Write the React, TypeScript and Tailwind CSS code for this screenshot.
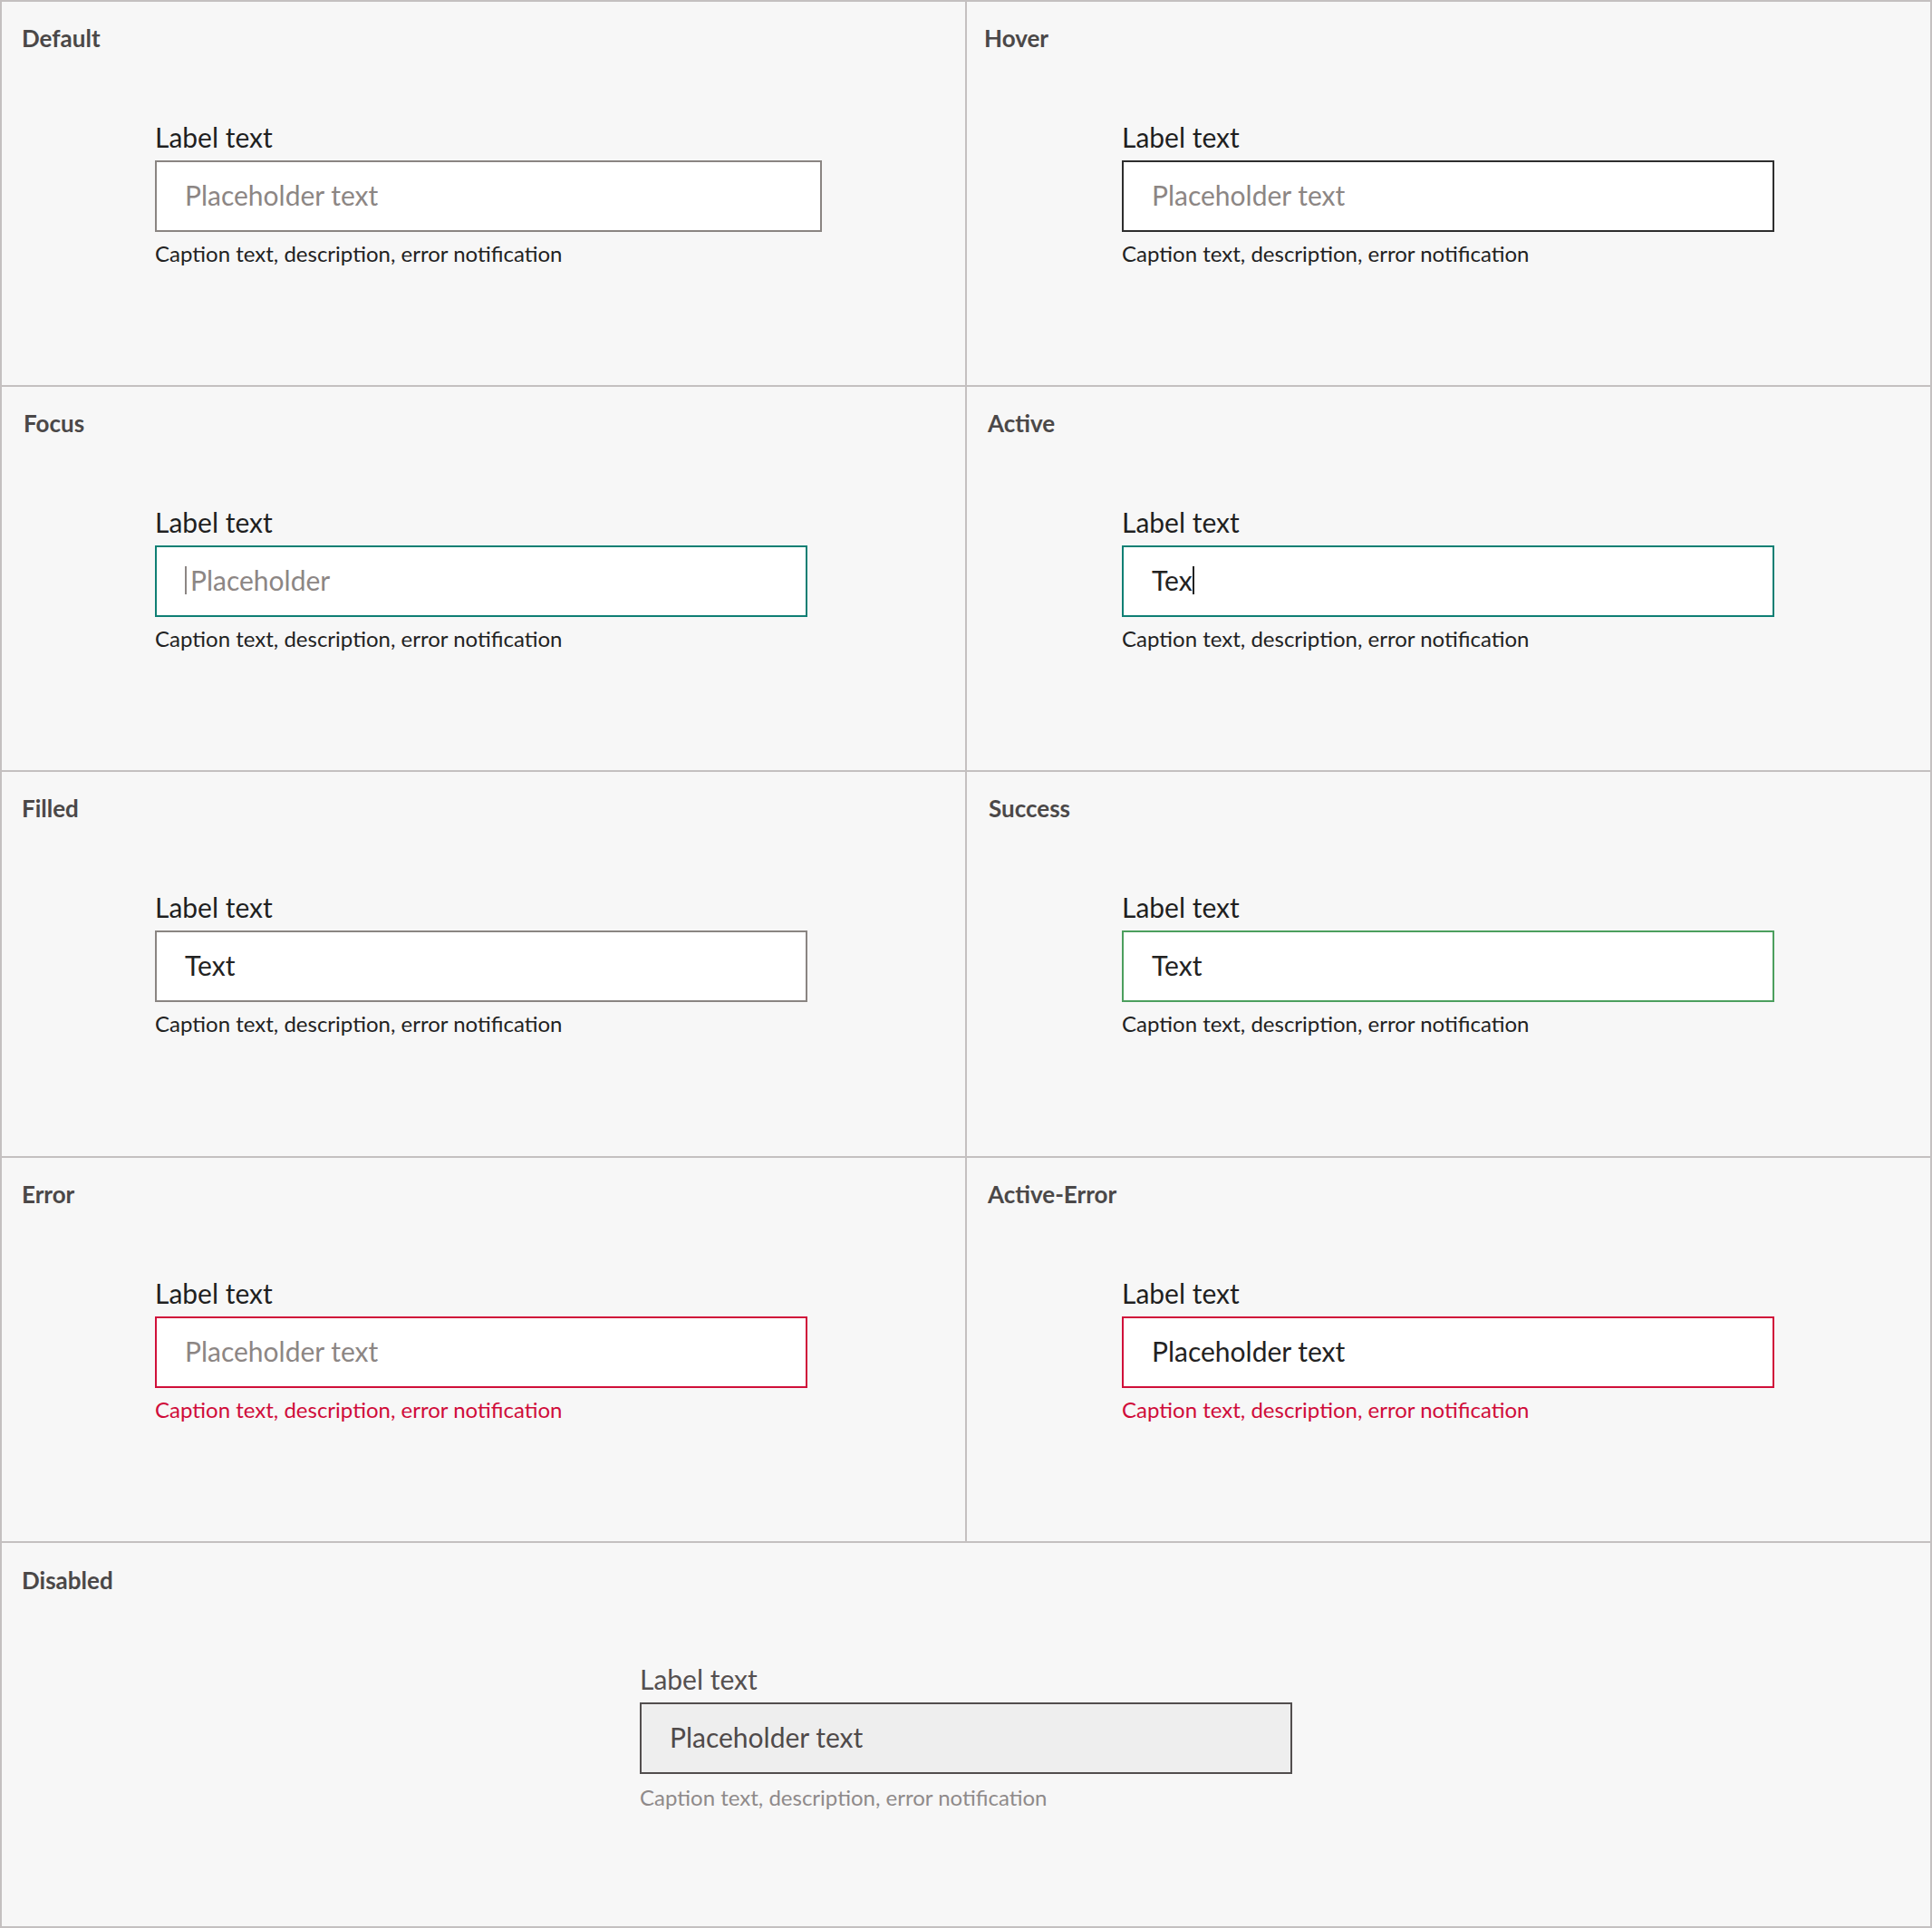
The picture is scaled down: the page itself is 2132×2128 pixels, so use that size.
import type { ReactNode } from "react";

type Variant =
  | "default"
  | "hover"
  | "focus"
  | "active"
  | "filled"
  | "success"
  | "error"
  | "activeError"
  | "disabled";

const BORDER: Record<Variant, string> = {
  default: "border-[#8a8582]",
  hover: "border-[#2e2e2e]",
  focus: "border-[#0f7f74]",
  active: "border-[#0f7f74]",
  filled: "border-[#8a8582]",
  success: "border-[#4c9f5e]",
  error: "border-[#d0103a]",
  activeError: "border-[#d0103a]",
  disabled: "border-[#524e4e]",
};

const Caret = ({ dark }: { dark?: boolean }) => (
  <span className={`inline-block w-[2px] h-[31px] ${dark ? "bg-[#222]" : "bg-[#8c8684]"}`} />
);

function Value({ variant }: { variant: Variant }) {
  switch (variant) {
    case "focus":
      return (
        <span className="flex items-center text-[#8c8684]">
          <Caret />
          <span className="ml-[4px]">Placeholder</span>
        </span>
      );
    case "active":
      return (
        <span className="flex items-center text-[#222]">
          <span>Tex</span>
          <Caret dark />
        </span>
      );
    case "filled":
    case "success":
      return <span className="text-[#222]">Text</span>;
    case "activeError":
      return <span className="text-[#222]">Placeholder text</span>;
    case "disabled":
      return <span className="text-[#4f4a4a]">Placeholder text</span>;
    default:
      return <span className="text-[#8c8684]">Placeholder text</span>;
  }
}

function Field({ variant, place }: { variant: Variant; place: string }) {
  const disabled = variant === "disabled";
  const errorish = variant === "error" || variant === "activeError";
  return (
    <div className={`mt-[76px] ${place} w-[720px] flex flex-col`}>
      <div className={`text-[30px] leading-[36px] ${disabled ? "text-[#555050]" : "text-[#1f1f1f]"}`}>
        Label text
      </div>
      <div
        className={`mt-[8px] h-[79px] border-2 ${BORDER[variant]} ${
          disabled ? "bg-[#eeeeee]" : "bg-white"
        } ${variant === "default" ? "w-[736px]" : "w-[720px]"} flex items-center pl-[31px] pb-[3px] text-[30px] leading-[36px]`}
      >
        <Value variant={variant} />
      </div>
      <div
        className={`${disabled ? "mt-[11px]" : "mt-[9px]"} text-[24px] leading-[29px] ${
          errorish ? "text-[#d00c3a]" : disabled ? "text-[#8f8a8a]" : "text-[#222]"
        }`}
      >
        Caption text, description, error notification
      </div>
    </div>
  );
}

function Cell({
  title,
  variant,
  titlePad,
  place,
  wide,
}: {
  title: string;
  variant: Variant;
  titlePad: string;
  place: string;
  wide?: boolean;
}) {
  return (
    <div className={`bg-[#f7f7f7] flex flex-col ${wide ? "col-span-2 pt-[26px]" : "pt-[25px]"}`}>
      <div className={`${titlePad} text-[26px] leading-[30px] font-bold text-[#4b4848]`}>{title}</div>
      <Field variant={variant} place={place} />
    </div>
  );
}

export default function App(): ReactNode {
  return (
    <div className="font-['Lato',sans-serif] grid grid-cols-2 grid-rows-5 gap-[2px] p-[2px] bg-[#c4c0c0] w-[2132px] h-[2128px]">
      <Cell title="Default" variant="default" titlePad="pl-[22px]" place="ml-[169px]" />
      <Cell title="Hover" variant="hover" titlePad="pl-[19px]" place="ml-[171px]" />
      <Cell title="Focus" variant="focus" titlePad="pl-[24px]" place="ml-[169px]" />
      <Cell title="Active" variant="active" titlePad="pl-[23px]" place="ml-[171px]" />
      <Cell title="Filled" variant="filled" titlePad="pl-[22px]" place="ml-[169px]" />
      <Cell title="Success" variant="success" titlePad="pl-[24px]" place="ml-[171px]" />
      <Cell title="Error" variant="error" titlePad="pl-[22px]" place="ml-[169px]" />
      <Cell title="Active-Error" variant="activeError" titlePad="pl-[23px]" place="ml-[171px]" />
      <Cell title="Disabled" variant="disabled" titlePad="pl-[22px]" place="mx-auto" wide />
    </div>
  );
}
